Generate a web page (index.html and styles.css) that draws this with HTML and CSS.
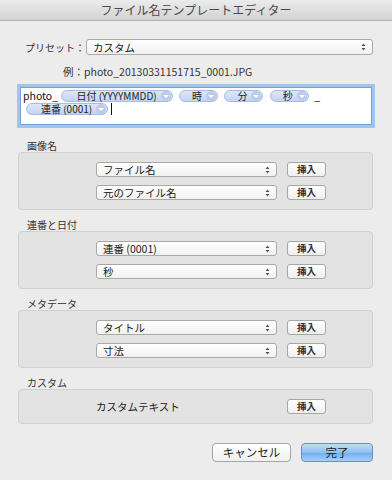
FILE: index.html
```html
<!DOCTYPE html>
<html lang="ja">
<head>
  <meta charset="UTF-8">
  <title>ファイル名テンプレートエディター</title>
  <link rel="stylesheet" href="styles.css">
</head>
<body>
  <div class="window">
    <header class="titlebar">ファイル名テンプレートエディター</header>

    <main class="content">
      <div class="preset-row">
        <span class="preset-label">プリセット：</span>
        <div class="select preset-select">
          <span>カスタム</span>
          <svg class="arrows" width="5" height="8" viewBox="0 0 5 8"><path d="M0.5 3 L2.5 0.5 L4.5 3 Z M0.5 5 L2.5 7.5 L4.5 5 Z" fill="#555"/></svg>
        </div>
      </div>

      <div class="example">例：photo_20130331151715_0001.JPG</div>

      <div class="template-box">
        <span class="plain">photo_</span>
        <span class="token">日付 (YYYYMMDD)<i class="drop"></i></span>
        <span class="token short">時<i class="drop"></i></span>
        <span class="token short">分<i class="drop"></i></span>
        <span class="token short">秒<i class="drop"></i></span>
        <span class="plain">_</span>
        <br>
        <span class="token first">連番 (0001)<i class="drop"></i></span><span class="caret"></span>
      </div>

      <div class="section-label">画像名</div>
      <div class="group">
        <div class="group-row">
          <div class="select"><span>ファイル名</span><svg class="arrows" width="5" height="8" viewBox="0 0 5 8"><path d="M0.5 3 L2.5 0.5 L4.5 3 Z M0.5 5 L2.5 7.5 L4.5 5 Z" fill="#555"/></svg></div>
          <button class="insert">挿入</button>
        </div>
        <div class="group-row">
          <div class="select"><span>元のファイル名</span><svg class="arrows" width="5" height="8" viewBox="0 0 5 8"><path d="M0.5 3 L2.5 0.5 L4.5 3 Z M0.5 5 L2.5 7.5 L4.5 5 Z" fill="#555"/></svg></div>
          <button class="insert">挿入</button>
        </div>
      </div>

      <div class="section-label">連番と日付</div>
      <div class="group">
        <div class="group-row">
          <div class="select"><span>連番 (0001)</span><svg class="arrows" width="5" height="8" viewBox="0 0 5 8"><path d="M0.5 3 L2.5 0.5 L4.5 3 Z M0.5 5 L2.5 7.5 L4.5 5 Z" fill="#555"/></svg></div>
          <button class="insert">挿入</button>
        </div>
        <div class="group-row">
          <div class="select"><span>秒</span><svg class="arrows" width="5" height="8" viewBox="0 0 5 8"><path d="M0.5 3 L2.5 0.5 L4.5 3 Z M0.5 5 L2.5 7.5 L4.5 5 Z" fill="#555"/></svg></div>
          <button class="insert">挿入</button>
        </div>
      </div>

      <div class="section-label">メタデータ</div>
      <div class="group">
        <div class="group-row">
          <div class="select"><span>タイトル</span><svg class="arrows" width="5" height="8" viewBox="0 0 5 8"><path d="M0.5 3 L2.5 0.5 L4.5 3 Z M0.5 5 L2.5 7.5 L4.5 5 Z" fill="#555"/></svg></div>
          <button class="insert">挿入</button>
        </div>
        <div class="group-row">
          <div class="select"><span>寸法</span><svg class="arrows" width="5" height="8" viewBox="0 0 5 8"><path d="M0.5 3 L2.5 0.5 L4.5 3 Z M0.5 5 L2.5 7.5 L4.5 5 Z" fill="#555"/></svg></div>
          <button class="insert">挿入</button>
        </div>
      </div>

      <div class="section-label">カスタム</div>
      <div class="group">
        <div class="group-row">
          <div class="custom-text">カスタムテキスト</div>
          <button class="insert">挿入</button>
        </div>
      </div>

      <div class="actions">
        <button class="action">キャンセル</button>
        <button class="action primary">完了</button>
      </div>
    </main>
  </div>
</body>
</html>
```

FILE: styles.css
```css
* {
  margin: 0;
  padding: 0;
  box-sizing: border-box;
}

body {
  width: 392px;
  height: 480px;
  background-color: #ececec;
  font-family: "Noto Sans CJK JP", "Liberation Sans", sans-serif;
  font-size: 11px;
  color: #262626;
  overflow: hidden;
}

.window {
  height: 480px;
  background-color: #ececec;
}

.titlebar {
  height: 21px;
  line-height: 20px;
  text-align: center;
  font-size: 12px;
  color: #4a4a4a;
  background: linear-gradient(#ececec, #d2d2d2);
  border-bottom: 1px solid #b1b1b1;
}

.content {
  padding: 0 18px;
}

/* preset */
.preset-row {
  display: flex;
  align-items: center;
  margin-top: 18px;
  height: 16px;
}

.preset-label {
  width: 66px;
  padding-left: 7px;
  margin-right: 2px;
  font-size: 10px;
  color: #333;
  white-space: nowrap;
}

.select {
  display: flex;
  align-items: center;
  justify-content: space-between;
  width: 181px;
  height: 15px;
  padding: 0 6px 0 6px;
  background: linear-gradient(#ffffff, #f1f1f1);
  border: 1px solid #a9a9a9;
  border-radius: 3px;
  font-size: 10.5px;
  color: #222;
  line-height: 13px;
}

.preset-select {
  flex: 1;
  height: 16px;
  margin-right: 1px;
}

.arrows {
  flex-shrink: 0;
}

.example {
  margin-top: 10px;
  height: 14px;
  line-height: 14px;
  padding-left: 45px;
  font-size: 10.5px;
  color: #333;
}

/* template field */
.template-box {
  margin: 5px -1px 0 -1px;
  height: 44px;
  padding: 2px 3px;
  background-color: #fff;
  border: 3px solid #a3c4ec;
  box-shadow: inset 0 0 0 1px #75a2d8;
  font-size: 10.5px;
  line-height: 12px;
  color: #111;
}

.plain {
  vertical-align: middle;
}

.token {
  display: inline-flex;
  align-items: center;
  height: 12px;
  margin-left: 1px;
  margin-right: 3px;
  padding: 0 1px 0 14px;
  background: linear-gradient(#dde7f9, #c3d4f2);
  border: 1px solid #a6bce5;
  border-radius: 6px;
  font-size: 10px;
  line-height: 10px;
  color: #222;
  vertical-align: middle;
}

.token.short {
  padding-left: 12px;
}

.token.first {
  margin-left: 3px;
}

.drop {
  display: inline-block;
  width: 10px;
  height: 10px;
  margin-left: 4px;
  border-radius: 50%;
  background-color: #bccbeb;
  position: relative;
}

.drop::after {
  content: "";
  position: absolute;
  left: 2px;
  top: 4px;
  border-left: 3px solid transparent;
  border-right: 3px solid transparent;
  border-top: 3.5px solid #ffffff;
}

.caret {
  display: inline-block;
  width: 1px;
  height: 12px;
  background-color: #111;
  vertical-align: middle;
}

/* groups */
.section-label {
  margin-top: 8px;
  padding-left: 9px;
  height: 13px;
  line-height: 13px;
  font-size: 10px;
  color: #333;
}

.template-box + .section-label {
  margin-top: 11px;
}

.group {
  display: flex;
  flex-direction: column;
  gap: 8px;
  width: 355px;
  padding: 9px 0 9px 77px;
  background-color: #e3e3e3;
  border: 1px solid #d0d0d0;
  border-radius: 4px;
}

.group-row {
  display: flex;
  align-items: center;
  gap: 10px;
  height: 15px;
}

.insert {
  width: 39px;
  height: 15px;
  background: linear-gradient(#ffffff, #efefef);
  border: 1px solid #a6a6a6;
  border-radius: 3px;
  font-family: inherit;
  font-size: 9.5px;
  font-weight: 700;
  color: #333;
  line-height: 13px;
}

.custom-text {
  width: 181px;
  font-size: 10.5px;
  color: #222;
}

/* bottom buttons */
.actions {
  display: flex;
  justify-content: flex-end;
  gap: 10px;
  margin-top: 19px;
  padding-right: 1px;
}

.action {
  width: 79px;
  height: 19px;
  background: linear-gradient(#ffffff, #f0f0f0);
  border: 1px solid #a5a5a5;
  border-radius: 4px;
  font-family: inherit;
  font-size: 11.5px;
  color: #222;
  line-height: 17px;
}

.action.primary {
  width: 72px;
  background: linear-gradient(#c4dcf7, #8ebff0 50%, #6faeec 51%, #a5d0f7);
  border-color: #6b8fc2;
}
```
